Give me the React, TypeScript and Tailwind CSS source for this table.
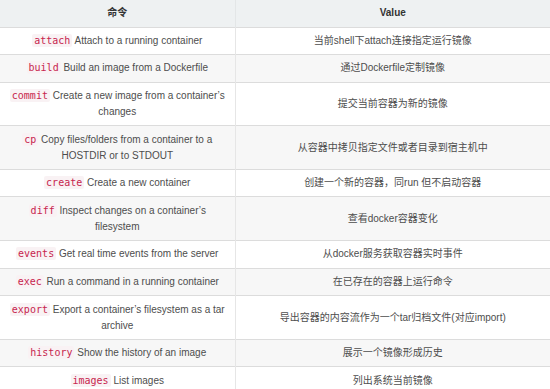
import React from 'react';

interface Row {
  cmd: string;
  desc: string;
  value: string;
}

const rows: Row[] = [
  { cmd: 'attach', desc: 'Attach to a running container', value: '当前shell下attach连接指定运行镜像' },
  { cmd: 'build', desc: 'Build an image from a Dockerfile', value: '通过Dockerfile定制镜像' },
  { cmd: 'commit', desc: 'Create a new image from a container’s changes', value: '提交当前容器为新的镜像' },
  { cmd: 'cp', desc: 'Copy files/folders from a container to a HOSTDIR or to STDOUT', value: '从容器中拷贝指定文件或者目录到宿主机中' },
  { cmd: 'create', desc: 'Create a new container', value: '创建一个新的容器，同run 但不启动容器' },
  { cmd: 'diff', desc: 'Inspect changes on a container’s filesystem', value: '查看docker容器变化' },
  { cmd: 'events', desc: 'Get real time events from the server', value: '从docker服务获取容器实时事件' },
  { cmd: 'exec', desc: 'Run a command in a running container', value: '在已存在的容器上运行命令' },
  { cmd: 'export', desc: 'Export a container’s filesystem as a tar archive', value: '导出容器的内容流作为一个tar归档文件(对应import)' },
  { cmd: 'history', desc: 'Show the history of an image', value: '展示一个镜像形成历史' },
  { cmd: 'images', desc: 'List images', value: '列出系统当前镜像' },
];

export default function App() {
  return (
    <div className="w-[550px] h-[389px] overflow-hidden bg-white font-['Liberation_Sans','Noto_Sans_CJK_SC',sans-serif] text-[10px] leading-[16px] text-[#4d4d4d]">
      <table className="w-full border-collapse table-fixed">
        <colgroup>
          <col className="w-[235px]" />
          <col />
        </colgroup>
        <thead>
          <tr className="bg-[#eef1f2]">
            <th className="h-[27px] px-2 font-bold text-[#333] text-center border-r border-[#e3e6e7]">命令</th>
            <th className="h-[27px] px-2 font-bold text-[#333] text-center">Value</th>
          </tr>
        </thead>
        <tbody>
          {rows.map((r, i) => (
            <tr key={r.cmd} className={`border-t border-[#dcdcdc] ${i % 2 === 1 ? 'bg-[#f7f7f7]' : 'bg-white'}`}>
              <td className="px-2 py-[5.3px] text-center align-middle border-r border-[#e6e6e6]">
                <code className="font-['DejaVu_Sans_Mono',monospace] text-[10px] leading-[14px] text-[#c7254e] bg-[#f9f2f4] px-[2px] py-[1px] rounded-[2px]">
                  {r.cmd}
                </code>{' '}
                {r.desc}
              </td>
              <td className="px-2 py-[5.3px] text-center align-middle">{r.value}</td>
            </tr>
          ))}
        </tbody>
      </table>
    </div>
  );
}
